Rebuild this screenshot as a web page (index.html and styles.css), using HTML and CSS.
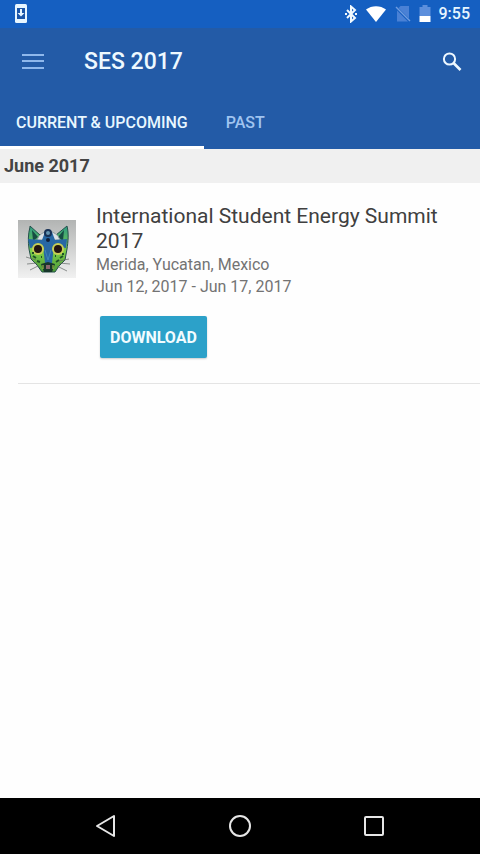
FILE: index.html
```html
<!DOCTYPE html>
<html lang="en">

<head>
    <meta charset="UTF-8">
    <meta name="viewport" content="width=device-width, initial-scale=1.0">
    <title>SES 2017</title>
    <link rel="stylesheet" href="styles.css">
</head>

<body>
    <div class="status">
        <svg class="saved" width="12" height="20" viewBox="0 0 12 20">
            <rect width="12" height="19" rx="1.500" fill="#e8f6ff" />
            <rect x="2" y="4" width="8" height="11" fill="#1b55a8" />
            <path d="M5 5h2v4h2.500L6 12.500 2.500 9H5z" fill="#e8f6ff" />
        </svg>
        <div class="signals">
            <svg width="12" height="18" viewBox="0 0 12 18">
                <path d="M2 5l8 8-4 3.500V1.500L10 5 2 13" fill="none" stroke="#f2faff" stroke-width="2" />
                <path d="M0 8h2v2H0zM10 8h2v2h-2z" fill="#f2faff" />
            </svg>
            <svg class="wifi" width="22" height="18" viewBox="0 0 22 18">
                <path d="M11 17L1 4.500C6.500 0 15.500 0 21 4.500z" fill="#fff" />
            </svg>
            <svg class="sim" width="16" height="18" viewBox="0 0 16 18">
                <path d="M5.500 1H14v12.500L3.500 3zM2 5.500L13 16.500H2z" fill="#4a81d5" />
                <path d="M1 2l14 14" stroke="#6f9ce0" stroke-width="1.400" />
            </svg>
            <svg class="battery" width="12" height="18" viewBox="0 0 12 18">
                <path d="M3.500 0h5v2H11.500v9H.500V2h3z" fill="#5d8fdc" />
                <path d="M.500 11h11v6H.500z" fill="#fff" />
            </svg>
            <span class="time">9:55</span>
        </div>
    </div>
    <header class="header">
        <div class="toolbar">
            <button class="iconBtn" aria-label="Menu">
                <svg width="22" height="18" viewBox="0 0 22 18">
                    <path d="M0 2h22M0 8h22M0 15h22" stroke="#8fb8ec" stroke-width="2" />
                </svg>
            </button>
            <h1>SES 2017</h1>
            <button class="iconBtn" aria-label="Search">
                <svg width="20" height="20" viewBox="0 0 20 20">
                    <circle cx="7.500" cy="7" r="5.600" fill="none" stroke="#eef8ff" stroke-width="2" />
                    <path d="M11.500 11l7 7" stroke="#eef8ff" stroke-width="2.600" />
                </svg>
            </button>
        </div>
        <nav class="tabs">
            <a href="#current" class="active">CURRENT &amp; UPCOMING</a>
            <a href="#past">PAST</a>
        </nav>
    </header>
    <main class="main">
        <h2>June 2017</h2>
        <div class="event">
            <svg class="logo" width="58" height="58" viewBox="0 0 58 58">
                <defs>
                    <linearGradient id="back" x1="0" y1="0" x2="0" y2="1">
                        <stop offset="0" stop-color="#b2b4b3" />
                        <stop offset="1" stop-color="#f1f1f1" />
                    </linearGradient>
                    <linearGradient id="face" x1="0" y1="0" x2="0" y2="1">
                        <stop offset="0" stop-color="#2c9a83" />
                        <stop offset=".55" stop-color="#7fd048" />
                        <stop offset="1" stop-color="#4a9a38" />
                    </linearGradient>
                </defs>
                <rect width="58" height="58" fill="url(#back)" />
                <!-- ears and head -->
                <path d="M12 6l10 9h16l11-9c2 8 1 16 0 23l-2 11-6 6-4 6H24l-5-7-6-6-2-10c-1-7-1-15 1-22z" fill="url(#face)" stroke="#24504b" />
                <path d="M14 10l6 7-5 4zM46 10l-6 7 5 4z" fill="#164c43" />
                <path d="M19 20a12 12 0 0 1 23 0z" fill="#dde3e8" stroke="#8d9b9e" />
                <!-- mask -->
                <path d="M10 19l14 1 3-8h7l3 8 12-1-1 9-12-2-2 17h-7l-2-17-13 2z" fill="#2868a4" />
                <circle cx="30" cy="13" r="3" fill="#6595b2" stroke="#173156" stroke-width="2" />
                <circle cx="30" cy="20" r="2" fill="#101f39" />
                <circle cx="20" cy="29" r="6" fill="#c8cf55" />
                <circle cx="40" cy="29" r="6" fill="#c8cf55" />
                <circle cx="20" cy="29" r="4" fill="#241512" />
                <circle cx="40" cy="29" r="4" fill="#241512" />
                <path d="M27 30l3 10 3-10" fill="none" stroke="#3f86b8" />
                <path d="M23 44l7-2 7 2-3 8h-8z" fill="#17372b" />
                <path d="M28 45h4v4h-4z" fill="#8c6570" />
                <path d="M25 45v4M35 45v4" stroke="#b7d447" />
                <path d="M15 36l3 2M19 41l3 1M42 38l3-2M38 42l3-2M14 33h2M44 34h2M23 37h1M37 36h1" stroke="#1d5128" stroke-width="2" />
                <path d="M18 40L8 37M19 43l-10 1M20 46l-8 4M41 41l10-2M41 43l11 1M39 46l10 5" fill="none" stroke="#626766" stroke-width=".700" />
            </svg>
            <div class="info">
                <h3>International Student Energy Summit 2017</h3>
                <p>Merida, Yucatan, Mexico</p>
                <p>Jun 12, 2017 - Jun 17, 2017</p>
                <button class="download">DOWNLOAD</button>
            </div>
        </div>
    </main>
    <footer class="navbar">
        <button aria-label="Back">
            <svg width="24" height="24" viewBox="0 0 24 24">
                <path d="M3 12l17-10v20z" />
            </svg>
        </button>
        <button aria-label="Home">
            <svg width="24" height="24" viewBox="0 0 24 24">
                <circle cx="12" cy="12" r="10" />
            </svg>
        </button>
        <button aria-label="Recent apps">
            <svg width="24" height="24" viewBox="0 0 24 24">
                <rect x="3" y="3" width="18" height="18" rx="1" />
            </svg>
        </button>
    </footer>
</body>

</html>
```

FILE: styles.css
```css
* {
    margin: 0;
    padding: 0;
    box-sizing: border-box;
}

body {
    min-height: 100vh;
    display: flex;
    flex-direction: column;
    background-color: #fefefe;
    font-family: Roboto, "Liberation Sans", sans-serif;
}

button {
    border: 0;
    background: none;
    font-family: inherit;
}

svg {
    display: block;
    flex-shrink: 0;
}

.status {
    height: 28px;
    padding: 0 10px 0 15px;
    display: flex;
    justify-content: space-between;
    align-items: center;
    background-color: #155fc1;
}

.signals {
    display: flex;
    align-items: center;
    gap: 8px;
}

.time {
    font-size: 16px;
    font-weight: 500;
    line-height: 28px;
    color: #e8f6ff;
}

.header {
    background-color: #235ba7;
}

.toolbar {
    height: 67px;
    padding: 0 18px 0 22px;
    display: flex;
    align-items: center;
}

.toolbar h1 {
    flex: 1;
    margin-left: 40px;
    font-size: 23px;
    font-weight: 500;
    color: #eef9ff;
}

.tabs {
    display: flex;
}

.tabs a {
    height: 54px;
    padding: 0 16px;
    border-bottom: 3px solid transparent;
    font-size: 16px;
    font-weight: 500;
    line-height: 55px;
    color: #a0c4f0;
    text-decoration: none;
}

.tabs a + a {
    padding: 0 22px;
}

.tabs .active {
    border-color: #fff;
    color: #e8f7ff;
}

.main {
    flex: 1;
}

.main h2 {
    padding: 0 4px;
    font-size: 18px;
    font-weight: 700;
    line-height: 34px;
    color: #444;
    background-color: #f0f0f0;
}

.event {
    margin-left: 18px;
    padding: 21px 16px 25px 0;
    display: flex;
    gap: 20px;
    border-bottom: 1px solid #e4e4e4;
}

.logo {
    margin-top: 16px;
}

.info h3 {
    font-size: 21px;
    font-weight: 400;
    line-height: 25px;
    color: #404040;
}

.info p {
    font-size: 16px;
    line-height: 22px;
    color: #737373;
}

.download {
    height: 42px;
    margin: 18px 4px 0;
    padding: 0 10px;
    border-radius: 2px;
    font-size: 16px;
    font-weight: 700;
    color: #f2fcff;
    background-color: #2ca1c9;
    box-shadow: 0 1px 2px rgba(0, 0, 0, 0.2);
}

.navbar {
    height: 56px;
    display: flex;
    justify-content: center;
    background-color: #000;
}

.navbar button {
    width: 28%;
    display: flex;
    justify-content: center;
    align-items: center;
}

.navbar svg {
    fill: none;
    stroke: #e6e6e6;
    stroke-width: 2;
    stroke-linejoin: round;
}
```
